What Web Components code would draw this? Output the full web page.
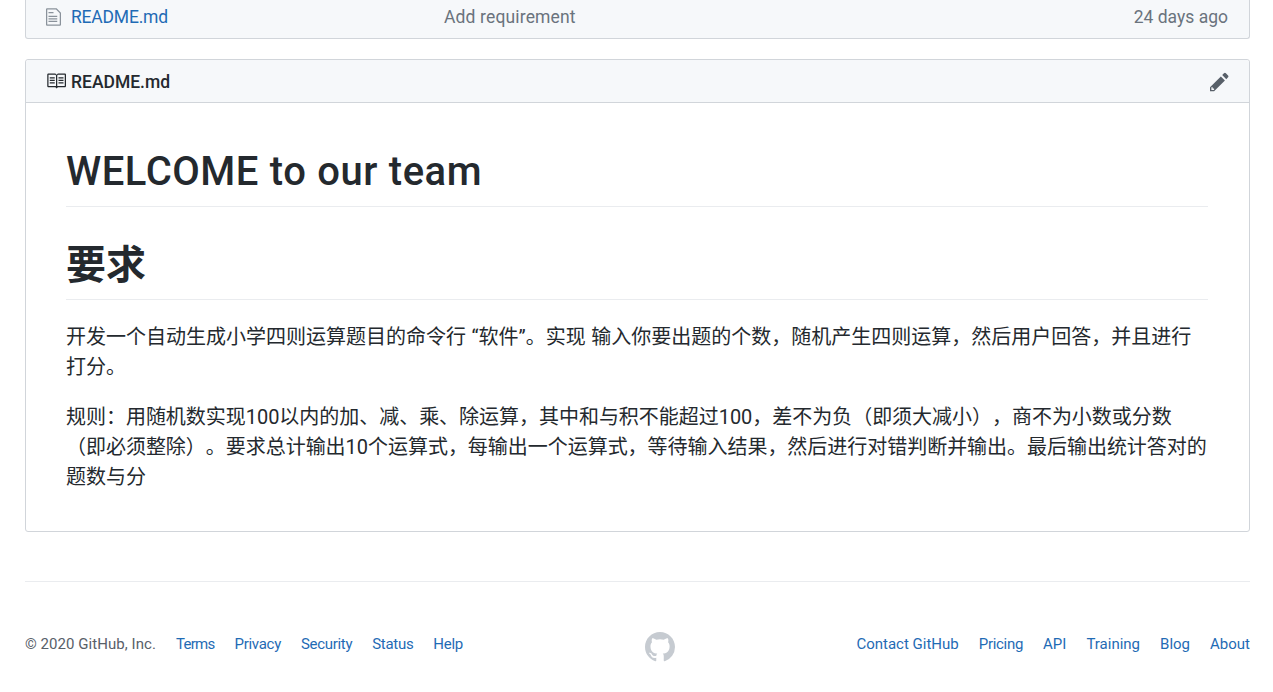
<!DOCTYPE html>
<html lang="zh">
<head>
<meta charset="utf-8">
<title>README.md</title>
<style>
    html, body { margin: 0; background: #fff; }
    body {
        font-family: Roboto, "Noto Sans CJK SC", sans-serif;
        color: #24292e;
        height: 692px;
        overflow: hidden;
    }
</style>
</head>
<body>
<gh-page>
    <gh-file-row name="README.md" message="Add requirement" age="24 days ago"></gh-file-row>
    <gh-readme name="README.md">
        <h1 slot="title">WELCOME to our team</h1>
        <h2 slot="heading">要求</h2>
        <p>开发一个自动生成小学四则运算题目的命令行 “软件”。实现 输入你要出题的个数，随机产生四则运算，然后用户回答，并且进行打分。</p>
        <p>规则：用随机数实现100以内的加、减、乘、除运算，其中和与积不能超过100，差不为负（即须大减小），商不为小数或分数（即必须整除）。要求总计输出10个运算式，每输出一个运算式，等待输入结果，然后进行对错判断并输出。最后输出统计答对的题数与分</p>
    </gh-readme>
    <gh-footer></gh-footer>
</gh-page>

<script>
const SANS = `Roboto, "Noto Sans CJK SC", sans-serif`;

class GhPage extends HTMLElement {
    constructor() {
        super();
        this.attachShadow({ mode: 'open' });
        this.shadowRoot.innerHTML = `
<style>
    :host { display: block; padding: 0 23px 0 25px; }
</style>
<slot></slot>`;
    }
}
customElements.define('gh-page', GhPage);

class GhFileRow extends HTMLElement {
    constructor() {
        super();
        this.attachShadow({ mode: 'open' });
        this.shadowRoot.innerHTML = `
<style>
    :host {
        display: grid;
        grid-template-columns: 398px 1fr auto;
        align-items: center;
        padding: 0 21px 5px 20px;
        box-sizing: border-box;
        height: 39px;
        background: #f6f8fa;
        border: 1px solid #d1d5da;
        border-top: 0;
        border-radius: 0 0 3px 3px;
        font: 17.5px ${SANS};
        color: #6a737d;
    }
    .name { display: flex; align-items: center; gap: 10px; }
    a { color: #1f6bb5; text-decoration: none; letter-spacing: -.2px; }
    svg { display: block; fill: #8a929b; }
    .msg { letter-spacing: .15px; }
</style>
<span class="name">
    <svg width="15" height="20" viewBox="0 0 12 16"><path d="M6 5H2V4h4v1zM2 8h7V7H2v1zm0 2h7V9H2v1zm0 2h7v-1H2v1zm10-7.5V14c0 .55-.45 1-1 1H1c-.55 0-1-.45-1-1V2c0-.55.45-1 1-1h7.5L12 4.5zM11 5L8 2H1v12h10V5z"/></svg>
    <a href="#"></a>
</span>
<span class="msg"></span>
<span class="age"></span>`;
    }

    connectedCallback() {
        this.shadowRoot.querySelector('a').textContent = this.getAttribute('name');
        this.shadowRoot.querySelector('.msg').textContent = this.getAttribute('message');
        this.shadowRoot.querySelector('.age').textContent = this.getAttribute('age');
    }
}
customElements.define('gh-file-row', GhFileRow);

class GhReadme extends HTMLElement {
    constructor() {
        super();
        this.attachShadow({ mode: 'open' });
        this.shadowRoot.innerHTML = `
<style>
    :host {
        display: block;
        margin-top: 20px;
        border: 1px solid #d1d5da;
        border-radius: 3px;
        font: 20px/30px ${SANS};
        color: #24292e;
        text-spacing-trim: space-all;
        word-spacing: .5px;
    }
    header {
        display: flex;
        align-items: center;
        justify-content: space-between;
        height: 42px;
        padding: 0 20px;
        background: #f6f8fa;
        border-bottom: 1px solid #d1d5da;
        border-radius: 3px 3px 0 0;
        font-size: 17.5px;
        font-weight: 500;
    }
    .name { display: flex; align-items: center; gap: 5px; }
    #name { padding-top: 2px; }
    svg { display: block; }
    .book { fill: #24292e; }
    .pencil { fill: #586069; margin-top: 2px; }
    article { padding: 40px 41px 39px 40px; }
    ::slotted(h1) {
        margin: 0 0 30px;
        padding: 4px 0 9px;
        border-bottom: 1px solid #eaecef;
        font-size: 40px;
        line-height: 50px;
        font-weight: 500;
        letter-spacing: .5px;
    }
    ::slotted(h2) {
        margin: 0 0 20px;
        padding: 4px 0 8px;
        border-bottom: 1px solid #eaecef;
        font-size: 40px;
        line-height: 50px;
        font-weight: 700;
    }
    ::slotted(p) { margin: 0 -2px 18px 0; padding-top: 2px; }
    ::slotted(p:last-child) { margin-bottom: 0; letter-spacing: -.03px; }
</style>
<header>
    <span class="name">
        <svg class="book" width="20" height="20" viewBox="0 0 16 16"><path d="M3 5h4v1H3V5zm0 3h4V7H3v1zm0 2h4V9H3v1zm11-5h-4v1h4V5zm0 2h-4v1h4V7zm0 2h-4v1h4V9zm2-6v9c0 .55-.45 1-1 1H9.5l-1 1-1-1H2c-.55 0-1-.45-1-1V3c0-.55.45-1 1-1h5.5l1 1 1-1H15c.55 0 1 .45 1 1zm-8 .5L7.5 3H2v9h6V3.5zm7-.5H9.5l-.5.5V12h6V3z"/></svg>
        <span id="name"></span>
    </span>
    <svg class="pencil" width="19" height="21.7" viewBox="0 0 14 16"><path d="M0 12v3h3l8-8-3-3-8 8zm3 2H1v-2h1v1h1v1zm10.3-9.3L12 6 9 3l1.3-1.3a.996.996 0 011.41 0l1.59 1.59c.39.39.39 1.02 0 1.41z"/></svg>
</header>
<article>
    <slot name="title"></slot>
    <slot name="heading"></slot>
    <slot></slot>
</article>`;
    }

    connectedCallback() {
        this.shadowRoot.querySelector('#name').textContent = this.getAttribute('name');
    }
}
customElements.define('gh-readme', GhReadme);

class GhFooter extends HTMLElement {
    constructor() {
        super();
        this.attachShadow({ mode: 'open' });
        this.shadowRoot.innerHTML = `
<style>
    :host {
        display: flex;
        justify-content: space-between;
        align-items: center;
        margin-top: 49px;
        padding-top: 50px;
        border-top: 1px solid #eaecef;
        font: 15px ${SANS};
        color: #586069;
    }
    nav { display: flex; gap: 20px; align-items: center; padding-bottom: 6px; }
    a { color: #1f6bb5; text-decoration: none; }
    .tight a, a.tight { letter-spacing: -.3px; }
    .tight a.terms { letter-spacing: -.7px; }
    .copy { letter-spacing: .05px; }
    svg { display: block; fill: #c6cbd1; }
</style>
<nav class="tight">
    <span class="copy">© 2020 GitHub, Inc.</span>
    <a href="#" class="terms">Terms</a>
    <a href="#">Privacy</a>
    <a href="#">Security</a>
    <a href="#">Status</a>
    <a href="#">Help</a>
</nav>
<svg width="30" height="30" viewBox="0 0 16 16"><path d="M8 0C3.58 0 0 3.58 0 8c0 3.54 2.29 6.53 5.47 7.59.4.07.55-.17.55-.38 0-.19-.01-.82-.01-1.49-2.01.37-2.53-.49-2.69-.94-.09-.23-.48-.94-.82-1.13-.28-.15-.68-.52-.01-.53.63-.01 1.08.58 1.23.82.72 1.21 1.87.87 2.33.66.07-.52.28-.87.51-1.07-1.78-.2-3.64-.89-3.64-3.95 0-.87.31-1.59.82-2.15-.08-.2-.36-1.02.08-2.12 0 0 .67-.21 2.2.82.64-.18 1.32-.27 2-.27.68 0 1.36.09 2 .27 1.53-1.04 2.2-.82 2.2-.82.44 1.1.16 1.92.08 2.12.51.56.82 1.27.82 2.15 0 3.07-1.87 3.75-3.65 3.95.29.25.54.73.54 1.48 0 1.07-.01 1.93-.01 2.2 0 .21.15.46.55.38A8.013 8.013 0 0016 8c0-4.42-3.58-8-8-8z"/></svg>
<nav>
    <a href="#">Contact GitHub</a>
    <a href="#" class="tight">Pricing</a>
    <a href="#">API</a>
    <a href="#">Training</a>
    <a href="#">Blog</a>
    <a href="#">About</a>
</nav>`;
    }
}
customElements.define('gh-footer', GhFooter);
</script>
</body>
</html>
